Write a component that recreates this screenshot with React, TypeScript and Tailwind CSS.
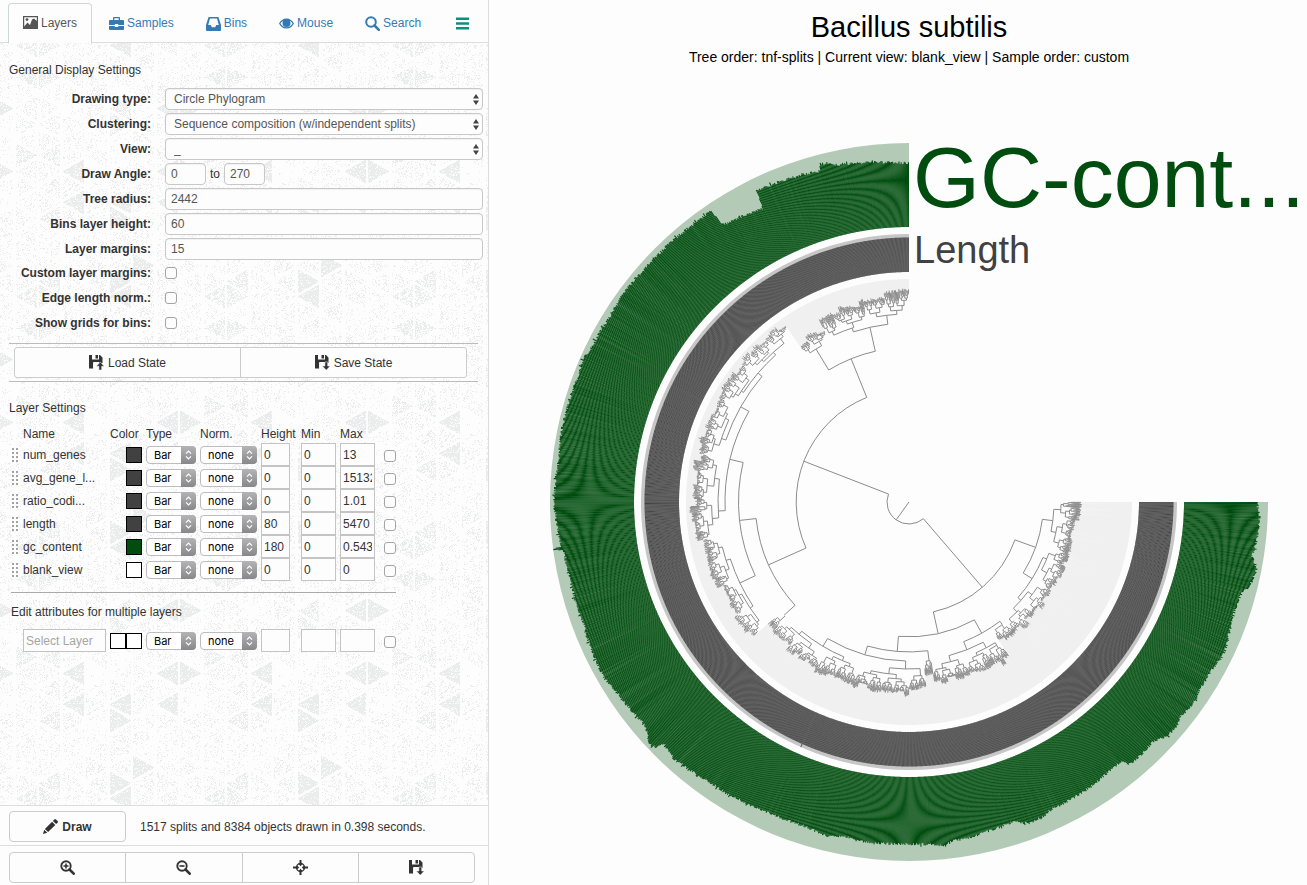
import React from "react";

/* ---------- helpers ---------- */

function makeRandom(seed: number) {
  let s = seed;
  return () => {
    s = (s + 0x6d2b79f5) | 0;
    let t = Math.imul(s ^ (s >>> 15), 1 | s);
    t = (t + Math.imul(t ^ (t >>> 7), 61 | t)) ^ t;
    return ((t ^ (t >>> 14)) >>> 0) / 4294967296;
  };
}

const CX = 909;
const CY = 502;
const SPLITS = 1517;

function polar(r: number, deg: number) {
  const t = (deg * Math.PI) / 180;
  return `${(CX + r * Math.cos(t)).toFixed(2)} ${(CY + r * Math.sin(t)).toFixed(2)}`;
}

function sector(r0: number, r1: number) {
  return `M${polar(r0, 0)}L${polar(r1, 0)}A${r1} ${r1} 0 1 1 ${polar(r1, 270)}L${polar(r0, 270)}A${r0} ${r0} 0 1 0 ${polar(r0, 0)}Z`;
}

function wedge(r0: number, r1: number, a: number, b: number) {
  return `M${polar(r0, a)}L${polar(r1, a)}L${polar(r1, b)}L${polar(r0, b)}Z`;
}

/* ---------- GC-content profile: [angle, outer radius] ---------- */

const PROFILE: [number, number][] = [
  [0, 347.7], [2.4, 351], [6.2, 349.7], [9, 347], [10.8, 354], [14, 351], [15.3, 345], [18.3, 343],
  [22.9, 346.6], [25.6, 350], [29.4, 345.5], [32.2, 346], [35.3, 348.4], [38.4, 345.7], [40, 349.4],
  [42.3, 348.5], [44.4, 342], [48.4, 343], [50.1, 342.5], [50.6, 335], [53.9, 335.7], [57, 337.7],
  [62.2, 338.6], [65.4, 338.7], [66.9, 342], [69.6, 342.8], [71.9, 336], [76.7, 338.7], [80.3, 341.2],
  [82.5, 341], [84, 345.5], [86, 342.9], [90, 342], [96, 342.5], [99.4, 342], [100.6, 340.4],
  [103.8, 344], [107.5, 340.4], [111, 340.7], [117, 342], [122, 343.7], [126, 343.8], [132.6, 348.2],
  [135.5, 344.4], [136, 353], [137.1, 355.7], [138, 351], [140.2, 345.8], [146, 348.4], [150.3, 352],
  [155.6, 350], [159.6, 347.5], [163.6, 348], [168.1, 347], [172.1, 349], [172.3, 358.5], [172.5, 358.5],
  [172.7, 351], [174.3, 351.4], [178.2, 354.2], [180.9, 355], [186.3, 352.8], [191.7, 354.7],
  [196.1, 354.7], [200, 354], [203.8, 356], [205.5, 353.4], [211.8, 351.8], [217.3, 354], [221.9, 352.4],
  [228, 352.4], [231.5, 351.8], [235.8, 352.4], [236.1, 335], [237, 332], [239.3, 331], [243.5, 328],
  [243.9, 346.6], [249.8, 344.8], [254.9, 342.8], [255.3, 349.7], [258.4, 344], [264, 341.5], [270, 338.7],
];

function profileAt(a: number) {
  for (let i = 1; i < PROFILE.length; i++) {
    const [a1, r1] = PROFILE[i];
    if (a <= a1) {
      const [a0, r0] = PROFILE[i - 1];
      return r0 + ((r1 - r0) * (a - a0)) / (a1 - a0);
    }
  }
  return 339;
}

const gcBars: string[] = [];
const lengthBars: string[] = [];
{
  const rnd = makeRandom(41);
  const step = 270 / SPLITS;
  for (let i = 0; i < SPLITS; i++) {
    const a = i * step;
    const jitter = (rnd() - 0.5) * 2.6 + (rnd() < 0.05 ? 1.5 : 0);
    gcBars.push(wedge(275, profileAt(a + step / 2) + jitter, a, a + step));
    lengthBars.push(wedge(230, i === 639 ? 268 : 264.5, a, a + step));
  }
}

/* ---------- dendrogram ---------- */

type Cluster = { a: number; r: number; lo: number; hi: number; leaf: number };
type Branch = { a: number; r: number; kids: TreeNode[] };
type TreeNode = Cluster | Branch;

const b = (a: number, r: number, ...kids: TreeNode[]): Branch => ({ a, r, kids });
const c = (a: number, r: number, lo: number, hi: number, leaf: number): Cluster => ({ a, r, lo, hi, leaf });

const TREE: TreeNode = b(
  125.7, 22,
  b(49.3, 112.5,
    b(19.7, 134.5,
      b(7.4, 145, c(2.9, 152, 0, 6.2, 170), c(11.7, 150, 6.2, 18, 168)),
      b(31.9, 145,
        c(22.5, 149, 18, 32, 170),
        b(41.3, 149, c(37, 154, 32, 41.7, 170), c(45.5, 154, 41.7, 51, 170)))),
    b(77.5, 134.8,
      b(61, 150,
        c(52.7, 154, 51, 57, 168),
        b(68.6, 158.7, b(62.1, 165, c(58.5, 168, 57, 62.7, 187), c(66, 168, 62.7, 70.5, 186)), c(75.4, 165, 70.5, 82, 184))),
      b(94.5, 149.9,
        c(82.8, 160, 82, 84.7, 174),
        b(106.1, 159,
          b(91.2, 167, c(86.2, 174, 84.7, 90, 188), c(96.7, 173, 90, 107, 192)),
          b(120.8, 168, c(112.8, 172, 107, 119.2, 193), c(129.7, 172, 119.2, 136.7, 190)))))),
  b(201.2, 112.8,
    b(155.9, 153.8,
      b(137.8, 168.5, c(137.4, 175, 136.7, 139.2, 186)),
      b(173.8, 170.5,
        b(154.4, 187.5,
          b(146.3, 191, c(141.7, 194, 139.2, 146.7, 209), c(151.2, 194, 146.7, 155.8, 207)),
          c(162.3, 192, 155.8, 169.6, 211)),
        b(193.4, 184,
          c(177.3, 191, 169.6, 193, 217),
          b(209.5, 193.3,
            c(198.7, 198, 193, 208.8, 217),
            b(220.5, 198.5, c(213.5, 201, 208.8, 219.5, 219), c(227.8, 202, 219.5, 235, 219)))))),
    b(248, 154.5,
      c(238.7, 179, 235, 243.7, 194),
      b(257.4, 179,
        c(251.9, 183, 243.7, 257.1, 206),
        b(263.2, 188, c(260.1, 192, 257.1, 263.1, 207), c(266.3, 192, 263.1, 270, 213))))),
);

const treeSegments: string[] = [`M${polar(0, 0)}L${polar(22, 125.7)}`];
const guideSegments: string[] = [];
{
  const rnd = makeRandom(7);
  const arc = (r: number, a0: number, a1: number) =>
    treeSegments.push(`M${polar(r, a0)}A${r.toFixed(1)} ${r.toFixed(1)} 0 0 1 ${polar(r, a1)}`);
  const ray = (a: number, r0: number, r1: number) => treeSegments.push(`M${polar(r0, a)}L${polar(r1, a)}`);

  const grow = (a: number, r: number, lo: number, hi: number, leaf: number) => {
    const n = Math.max(1, Math.round((hi - lo) / 0.24));
    if (n === 1) {
      const tip = Math.min(222, Math.max(r + 1, leaf - 2 + rnd() * 3));
      ray(a, r, tip);
      guideSegments.push(wedge(tip, 223, lo, hi));
      return;
    }
    const skew = n > 8 ? 0.3 + rnd() * 0.4 : 0.25 + rnd() * 0.5;
    const k = Math.min(n - 1, Math.max(1, Math.round(n * skew)));
    const s = lo + ((hi - lo) * k) / n;
    const aL = (lo + s) / 2;
    const aR = (s + hi) / 2;
    arc(r, aL, aR);
    for (const [ca, cl, ch, m] of [[aL, lo, s, k], [aR, s, hi, n - k]]) {
      const gain = m > 14 ? 0.14 + rnd() * 0.2 : 0.12 + rnd() * 0.28;
      const next = m === 1 ? r : Math.min(leaf - 1, r + Math.max(1.5, (leaf - r) * gain));
      /* small clades end at their own distance, which separates them into clumps */
      const childLeaf = m <= 12 && n > 12 ? leaf - 5 + rnd() * 7 : leaf;
      if (m > 1) ray(ca, r, next);
      grow(ca, next, cl, ch, childLeaf);
    }
  };

  const walk = (node: TreeNode, parentR: number) => {
    ray(node.a, parentR, node.r);
    if ("kids" in node) {
      const angles = node.kids.map((k) => k.a);
      if (node.kids.length > 1) arc(node.r, Math.min(...angles), Math.max(...angles));
      node.kids.forEach((k) => walk(k, node.r));
    } else {
      grow(node.a, node.r, node.lo, node.hi, node.leaf);
    }
  };
  walk(TREE, 22);
}

/* ---------- sidebar texture ---------- */

const TILE_W = 188;
const TILE_H = 251;
const ROW = TILE_H / 16;
const STRONG = new Set(["2,10", "6,10", "7,10", "2,12", "4,12", "6,12", "4,13", "5,0", "4,1", "4,2", "7,6", "6,6"]);
const SOFT = new Set(["0,9", "1,9", "1,13", "1,1", "0,2", "1,2", "0,4", "1,4", "4,7", "4,6"]);

const textureDots = (() => {
  const rnd = makeRandom(99);
  let d = "";
  for (let col = 0; col < 8; col++) {
    for (let n = 0; n < 16; n++) {
      const key = `${col},${n}`;
      const left = (col + n) % 2 === 0;
      const density = STRONG.has(key) ? 0.85 : SOFT.has(key) ? 0.5 : 0.06 + rnd() * 0.2;
      const x0 = Math.round(15.5 + 23.5 * col);
      const yc = Math.round(14 + ROW * n);
      for (let i = 0; i < 21; i++) {
        const half = (left ? i + 1 : 21 - i) * 0.56;
        for (let j = Math.ceil(-half); j <= half; j++) {
          if (rnd() < density) {
            const x = (x0 + i) % TILE_W;
            const y = (yc + j + TILE_H) % TILE_H;
            d += `M${x} ${y}h1v1h-1z`;
          }
        }
      }
    }
  }
  return d;
})();

function Texture() {
  return (
    <svg className="absolute inset-0 h-full w-full" aria-hidden="true">
      <defs>
        <pattern id="texture" width={TILE_W} height={TILE_H} patternUnits="userSpaceOnUse">
          <path d={textureDots} fill="#ebeded" shapeRendering="crispEdges" />
        </pattern>
      </defs>
      <rect width="100%" height="100%" fill="url(#texture)" />
    </svg>
  );
}

/* ---------- icons ---------- */

function Icon({ children }: { children: React.ReactNode }) {
  return (
    <svg viewBox="0 0 15 15" className="h-[15px] w-[15px] shrink-0" fill="currentColor" aria-hidden="true">
      {children}
    </svg>
  );
}

const PictureIcon = () => (
  <Icon>
    <path fillRule="evenodd" d="M0 1h15v13H0zM1.2 2.2v9.200L4.500 7.500l2.500 2.500 2-5.500 2-1 2.800 2.500V2.200z" />
    <circle cx="4" cy="4.600" r="1.400" />
  </Icon>
);
const BriefcaseIcon = () => (
  <Icon>
    <path fillRule="evenodd" d="M5 1h5a1 1 0 0 1 1 1v2h3a1 1 0 0 1 1 1v4H9.200V8H5.800v1H0V5a1 1 0 0 1 1-1h3V2a1 1 0 0 1 1-1zM5.300 2.300V4h4.400V2.300z" />
    <path d="M0 10h5.800v1h3.400v-1H15v3a1 1 0 0 1-1 1H1a1 1 0 0 1-1-1z" />
  </Icon>
);
const InboxIcon = () => (
  <Icon>
    <path fillRule="evenodd" d="M2.600 1h9.800L15 9v5a1 1 0 0 1-1 1H1a1 1 0 0 1-1-1V9zM4 2.600L2.200 9h2.600l1 2.200h3.400l1-2.200h2.600L11 2.600z" />
  </Icon>
);
const EyeIcon = () => (
  <Icon>
    <path fillRule="evenodd" d="M7.500 2.400c3.300 0 6 2 7.500 5.100-1.500 3.100-4.200 5.100-7.500 5.100S1.500 10.600 0 7.500C1.500 4.400 4.200 2.400 7.500 2.400zM4.300 4.700C3 5.300 2.100 6.300 1.400 7.500c1.300 2.300 3.500 3.800 6.100 3.800s4.800-1.500 6.100-3.800c-.7-1.200-1.600-2.200-2.900-2.800.5.7.8 1.500.8 2.300a4 4 0 0 1-8 0c0-.8.3-1.600.8-2.300z" />
    <path fillRule="evenodd" d="M7.500 3.600a3.300 3.300 0 1 1 0 6.600 3.300 3.300 0 0 1 0-6.600zM5.300 7.200l1.200.2C6.300 6.300 7 5.600 7.900 5.500l-.2-1.100C6.200 4.400 5.100 5.600 5.300 7.200z" />
  </Icon>
);
const SearchIcon = () => (
  <Icon>
    <circle cx="6" cy="6" r="4.800" fill="none" stroke="currentColor" strokeWidth="2" />
    <path d="M9.500 9.500l4.300 4.300" stroke="currentColor" strokeWidth="2.600" strokeLinecap="round" />
  </Icon>
);
const MenuIcon = () => (
  <Icon>
    <path d="M1 1.500h13V4H1zM1 6.200h13v2.500H1zM1 10.900h13v2.500H1z" />
  </Icon>
);
function ZoomIcon({ plus }: { plus?: boolean }) {
  return (
    <Icon>
      <circle cx="6" cy="6" r="4.700" fill="none" stroke="currentColor" strokeWidth="1.900" />
      <path d="M9.500 9.500l4.200 4.200" stroke="currentColor" strokeWidth="2.600" strokeLinecap="round" />
      <path d={plus ? "M3.500 5.200h1.700V3.500h1.600v1.700h1.700v1.600H6.800v1.700H5.200V6.800H3.500z" : "M3.500 5.200h5v1.600h-5z"} />
    </Icon>
  );
}
const CrosshairIcon = () => (
  <Icon>
    <circle cx="7.500" cy="7.500" r="4" fill="none" stroke="currentColor" strokeWidth="1.400" />
    <path d="M6.500 0h2v3l.7 1.300-1.700 1.900-1.700-1.900.7-1.300zM6.500 15h2v-3l.7-1.300-1.700-1.900-1.700 1.900.7 1.300zM0 6.500v2h3l1.300.7 1.900-1.700-1.900-1.700L3 6.500zM15 6.500v2h-3l-1.300.7-1.900-1.700 1.900-1.700 1.300.7z" />
  </Icon>
);
function FloppyIcon({ up }: { up?: boolean }) {
  return (
    <Icon>
      <path d="M0 0h3v4.500h7V0h1l2.500 2.500V8H4.200v5.500H0zM6.500 0H9v3.500H6.500z" />
      <path d="M4.200 7h6v6.500h-6z" fill="#fdfdfd" />
      <path d={up ? "M11.300 7l4 4.200h-2.600V15H9.900v-3.800H7.300z" : "M11.300 15.200l4-4.200h-2.600V7H9.900v4H7.300z"} stroke="#fdfdfd" strokeWidth="0.500" />
    </Icon>
  );
}
const PencilIcon = () => (
  <Icon>
    <path d="M0 15l1.200-4.300 3.100 3.100zM1.900 9.900l7.200-7.200 3.200 3.200-7.200 7.200zM9.900 2l1.400-1.500a1.200 1.200 0 0 1 1.700 0L14.600 2a1.200 1.200 0 0 1 0 1.700l-1.500 1.400z" />
  </Icon>
);

/* ---------- sidebar pieces ---------- */

const TABS = [
  { label: "Samples", icon: <BriefcaseIcon /> },
  { label: "Bins", icon: <InboxIcon /> },
  { label: "Mouse", icon: <EyeIcon /> },
  { label: "Search", icon: <SearchIcon /> },
];

function Tabs() {
  return (
    <nav className="relative flex h-[43px] items-end border-b border-[#ddd] bg-[#fdfdfd] pl-2">
      <a href="#layers" className="-mb-px flex h-10 items-center gap-[3px] rounded-t border border-b-0 border-[#cdd8d1] bg-[#fdfdfd] px-3.5 pb-0.5 text-[#555]">
        <PictureIcon />
        Layers
      </a>
      {TABS.map((t) => (
        <a key={t.label} href={`#${t.label.toLowerCase()}`} className="ml-0.5 flex h-[38px] items-center gap-[3px] px-[15px] text-[#337ab7]">
          {t.icon}
          {t.label}
        </a>
      ))}
      <a href="#menu" aria-label="Menu" className="ml-1 flex h-[38px] items-center px-[15px] text-[#128c7c]">
        <MenuIcon />
      </a>
    </nav>
  );
}

const LABEL = "w-[142px] shrink-0 text-right font-bold";
const FIELD = "h-[22px] rounded border border-[#c8c8c8] bg-[#fdfdfd] text-[#555] shadow-[inset_0_1px_1px_rgba(0,0,0,0.05)] outline-none";

function SelectRow({ id, label, value }: { id: string; label: string; value: string }) {
  return (
    <div className="flex h-[25px] items-center gap-3.5">
      <label htmlFor={id} className={LABEL}>{label}</label>
      <div className="relative flex-1">
        <select id={id} defaultValue={value} className={`${FIELD} block w-full appearance-none pl-2`}>
          <option>{value}</option>
        </select>
        <svg viewBox="0 0 6 11" className="pointer-events-none absolute top-[6px] right-1 h-[11px] w-1.5" fill="#444" aria-hidden="true">
          <path d="M3 0l3 4.500H0zM3 11L0 6.500h6z" />
        </svg>
      </div>
    </div>
  );
}

function TextRow({ id, label, value }: { id: string; label: string; value: string }) {
  return (
    <div className="flex h-[25px] items-center gap-3.5">
      <label htmlFor={id} className={LABEL}>{label}</label>
      <input id={id} type="text" defaultValue={value} className={`${FIELD} min-w-0 flex-1 px-[5px]`} />
    </div>
  );
}

const CHECK = "block h-3 w-3 appearance-none rounded-[3px] border border-[#a5a5a5] bg-[#fdfdfd]";

function CheckRow({ id, label }: { id: string; label: string }) {
  return (
    <div className="flex h-[25px] items-center gap-3.5 pb-px">
      <label htmlFor={id} className={LABEL}>{label}</label>
      <input id={id} type="checkbox" className={CHECK} />
    </div>
  );
}

function MiniSelect({ value, label, width }: { value: string; label: string; width: string }) {
  return (
    <div className={`relative ${width}`}>
      <select
        aria-label={label}
        defaultValue={value}
        className="block h-[18px] w-full appearance-none rounded border border-[#bdbdbd] bg-white pl-[7px] font-['Inter',sans-serif] text-[11px] leading-4 text-black outline-none"
      >
        <option>{value}</option>
      </select>
      <span className="pointer-events-none absolute inset-y-0 right-0 flex w-[15px] items-center justify-center rounded-r bg-gradient-to-b from-[#b4b4b6] to-[#88888b]">
        <svg viewBox="0 0 7 10" className="h-2.5 w-[7px]" fill="none" stroke="white" strokeWidth="1.200" aria-hidden="true">
          <path d="M1 3.700L3.500 1.200 6 3.700M1 6.300l2.500 2.500L6 6.300" />
        </svg>
      </span>
    </div>
  );
}

const CELL_INPUT = "block h-[23px] border border-[#c4c4c4] bg-[#fdfdfd] px-0.5 text-[#333] outline-none";

const LAYERS = [
  { name: "num_genes", color: "bg-[#414141]", height: "0", min: "0", max: "13" },
  { name: "avg_gene_l...", color: "bg-[#414141]", height: "0", min: "0", max: "15132" },
  { name: "ratio_codi...", color: "bg-[#414141]", height: "0", min: "0", max: "1.01" },
  { name: "length", color: "bg-[#414141]", height: "80", min: "0", max: "5470" },
  { name: "gc_content", color: "bg-[#004d0f]", height: "180", min: "0", max: "0.5433" },
  { name: "blank_view", color: "bg-white", height: "0", min: "0", max: "0" },
];

function RowControls({ name, height, min, max }: { name: string; height: string; min: string; max: string }) {
  return (
    <>
      <td className="p-0"><MiniSelect value="Bar" label={`${name} type`} width="w-[50px]" /></td>
      <td className="p-0"><MiniSelect value="none" label={`${name} normalization`} width="w-[57px]" /></td>
      <td className="p-0"><input type="text" aria-label={`${name} height`} defaultValue={height} className={`${CELL_INPUT} w-[29px]`} /></td>
      <td className="p-0"><input type="text" aria-label={`${name} min`} defaultValue={min} className={`${CELL_INPUT} w-[35px]`} /></td>
      <td className="p-0"><input type="text" aria-label={`${name} max`} defaultValue={max} className={`${CELL_INPUT} w-[35px]`} /></td>
      <td className="p-0 pt-0.5"><input type="checkbox" aria-label={`Select ${name}`} className={CHECK} /></td>
    </>
  );
}

function LayersTable() {
  return (
    <table className="ml-[11px] w-[385px] table-fixed border-collapse text-left">
      <colgroup>
        <col className="w-3" />
        <col className="w-[87px]" />
        <col className="w-9" />
        <col className="w-[54px]" />
        <col className="w-[61px]" />
        <col className="w-10" />
        <col className="w-[39px]" />
        <col className="w-11" />
        <col className="w-3" />
      </colgroup>
      <thead>
        <tr className="h-[18px]">
          <td />
          {["Name", "Color", "Type", "Norm.", "Height", "Min", "Max"].map((h) => (
            <th key={h} scope="col" className="p-0 font-normal">{h}</th>
          ))}
          <td />
        </tr>
      </thead>
      <tbody>
        {LAYERS.map((l) => (
          <tr key={l.name} className="h-[23px]">
            <td className="p-0">
              <svg viewBox="0 0 8 14" className="block h-3.5 w-2" fill="#a3a3a3" aria-hidden="true">
                <path d="M1 0h2v2H1zM5 0h2v2H5zM1 4h2v2H1zM5 4h2v2H5zM1 8h2v2H1zM5 8h2v2H5zM1 12h2v2H1zM5 12h2v2H5z" />
              </svg>
            </td>
            <td className="p-0 whitespace-nowrap">{l.name}</td>
            <td className="p-0">
              <button type="button" aria-label={`${l.name} color`} className={`ml-4 block h-4 w-4 border border-black ${l.color}`} />
            </td>
            <RowControls name={l.name} height={l.height} min={l.min} max={l.max} />
          </tr>
        ))}
        <tr>
          <td colSpan={9} className="p-0 pt-[11px]">
            <hr className="border-[#aaa]" />
            <h3 className="mt-[9px] mb-[7px] leading-5">Edit attributes for multiple layers</h3>
          </td>
        </tr>
        <tr className="h-[23px]">
          <td />
          <td className="p-0">
            <input type="text" aria-label="Select Layer" placeholder="Select Layer" className={`${CELL_INPUT} w-[83px] placeholder:text-[#a5a5a5]`} />
          </td>
          <td className="p-0">
            <div className="flex">
              <button type="button" aria-label="Minimum color" className="h-4 w-4 border border-black bg-white" />
              <button type="button" aria-label="Maximum color" className="h-4 w-4 border border-black bg-white" />
            </div>
          </td>
          <RowControls name="all layers" height="" min="" max="" />
        </tr>
      </tbody>
    </table>
  );
}

const GROUP_BUTTON = "flex h-full flex-1 items-center justify-center gap-1 border-l border-[#ccc] first:border-l-0";

function Sidebar() {
  return (
    <aside className="relative flex w-[489px] shrink-0 flex-col border-r border-[#ddd]">
      <Texture />
      <Tabs />
      <div className="relative flex-1 pt-[17px]">
        <h2 className="mb-1.5 pl-[9px] leading-5">General Display Settings</h2>
        <form className="pr-[5px] pl-[9px]">
          <SelectRow id="drawing" label="Drawing type:" value="Circle Phylogram" />
          <SelectRow id="clustering" label="Clustering:" value="Sequence composition (w/independent splits)" />
          <SelectRow id="view" label="View:" value="_" />
          <div className="flex h-[25px] items-center">
            <label htmlFor="angle-from" className={`${LABEL} mr-3.5`}>Draw Angle:</label>
            <input id="angle-from" type="text" defaultValue="0" className={`${FIELD} w-[41px] px-[5px]`} />
            <label htmlFor="angle-to" className="px-1">to</label>
            <input id="angle-to" type="text" defaultValue="270" className={`${FIELD} w-[41px] px-[5px]`} />
          </div>
          <TextRow id="radius" label="Tree radius:" value="2442" />
          <TextRow id="bins-height" label="Bins layer height:" value="60" />
          <TextRow id="margins" label="Layer margins:" value="15" />
          <CheckRow id="custom-margins" label="Custom layer margins:" />
          <CheckRow id="edge-norm" label="Edge length norm.:" />
          <CheckRow id="grids" label="Show grids for bins:" />
        </form>
        <div className="mt-[7px] mr-2.5 ml-[9px] border-y border-[#bbb] py-[3px] pr-[11px] pl-[5px]">
          <div className="flex h-[31px] rounded-[3px] border border-[#ccc] bg-[#fdfdfd]">
            <button type="button" className={GROUP_BUTTON}><FloppyIcon up />Load State</button>
            <button type="button" className={GROUP_BUTTON}><FloppyIcon />Save State</button>
          </div>
        </div>
        <h2 className="mt-4 mb-[7px] pl-[9px] leading-5">Layer Settings</h2>
        <LayersTable />
      </div>
      <div className="relative flex items-center border-t border-[#ddd] bg-[#fdfdfd] px-[9px] pt-[5px] pb-[3px]">
        <button type="button" className="flex h-[31px] w-[117px] items-center justify-center gap-1 rounded border border-[#ccc] font-bold">
          <PencilIcon />
          Draw
        </button>
        <p className="pl-3.5">1517 splits and 8384 objects drawn in 0.398 seconds.</p>
      </div>
      <div className="relative border-t border-[#ddd] bg-[#fdfdfd] pt-1.5 pr-[13px] pb-0.5 pl-[9px]">
        <div className="flex h-[31px] rounded border border-[#ccc]">
          <button type="button" aria-label="Zoom in" className={GROUP_BUTTON}><ZoomIcon plus /></button>
          <button type="button" aria-label="Zoom out" className={GROUP_BUTTON}><ZoomIcon /></button>
          <button type="button" aria-label="Center" className={GROUP_BUTTON}><CrosshairIcon /></button>
          <button type="button" aria-label="Save drawing" className={GROUP_BUTTON}><FloppyIcon /></button>
        </div>
      </div>
    </aside>
  );
}

/* ---------- drawing ---------- */

function Drawing() {
  return (
    <svg
      viewBox="489 70 818 815"
      preserveAspectRatio="xMinYMin meet"
      className="min-h-0 w-full flex-1 font-['Liberation_Sans',Arial,sans-serif]"
      role="img"
      aria-label="Circle phylogram"
    >
      <path d={sector(275, 359)} fill="#b3cab7" />
      <g fill="#004d0f">
        {gcBars.map((d, i) => <path key={i} d={d} />)}
      </g>
      <path d={sector(230, 268)} fill="#c6c6c6" />
      <g fill="#414141">
        {lengthBars.map((d, i) => <path key={i} d={d} />)}
      </g>
      <path d={guideSegments.join("")} fill="#f0f0f1" />
      <path d={treeSegments.join("")} fill="none" stroke="#8c8c8c" strokeWidth="1" />
      <text x="913" y="207" fontSize="86" fill="#004d0f">GC-cont...</text>
      <text x="914" y="263" fontSize="38" fill="#414141">Length</text>
    </svg>
  );
}

export default function App() {
  return (
    <div className="flex h-screen min-h-[885px] bg-[#fdfdfd] font-['Liberation_Sans',Arial,sans-serif] text-xs text-[#333]">
      <Sidebar />
      <main className="flex min-w-0 flex-1 flex-col">
        <header className="pt-2.5 pb-[3px] pl-[22px] text-center text-black">
          <h1 className="text-[29px] leading-[34px]">Bacillus subtilis</h1>
          <p className="mt-[3px] text-sm leading-5">Tree order: tnf-splits | Current view: blank_view | Sample order: custom</p>
        </header>
        <Drawing />
      </main>
    </div>
  );
}
